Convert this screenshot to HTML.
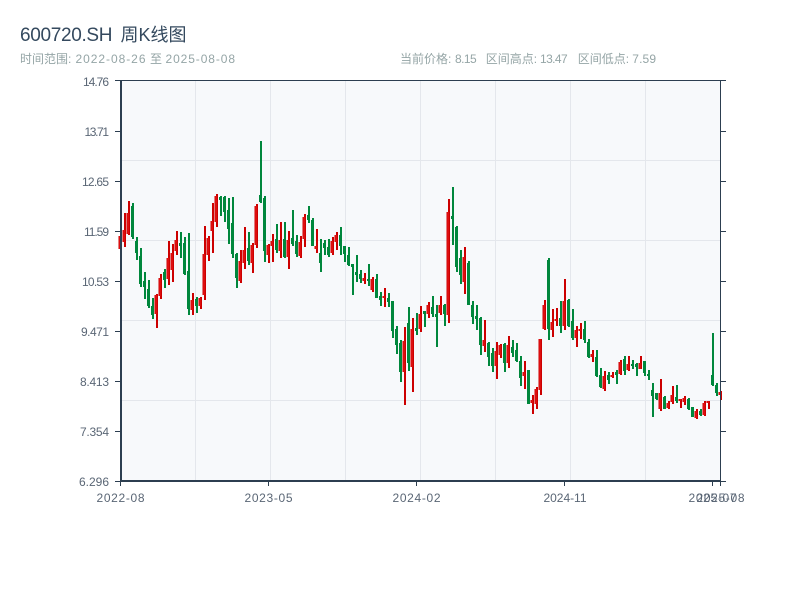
<!DOCTYPE html>
<html lang="zh">
<head>
<meta charset="utf-8">
<title>600720.SH 周K线图</title>
<style>
html,body{margin:0;padding:0;background:#fff;width:800px;height:600px;overflow:hidden}
svg{display:block}
text{font-family:"Liberation Sans","Noto Sans CJK SC",sans-serif}
.t{font-size:19px;fill:#34495e}
.c{font-size:18px;fill:#34495e}
.s{font-size:12px;fill:#95a5a6}
.a{font-size:12px;fill:#5a6675}
</style>
</head>
<body>
<svg width="800" height="600" viewBox="0 0 800 600" xmlns="http://www.w3.org/2000/svg">
<text x="20" y="41" class="t" textLength="92.5">600720.SH</text>
<text x="120.5" y="41" class="c">周K线图</text>
<text x="20" y="63" class="s">时间范围:</text>
<text x="75.5" y="63" class="s" textLength="70">2022-08-26</text>
<text x="150" y="63" class="s">至</text>
<text x="165.5" y="63" class="s" textLength="69.5">2025-08-08</text>
<text x="400" y="63" class="s">当前价格:</text>
<text x="455" y="63" class="s" textLength="21.7">8.15</text>
<text x="485.7" y="63" class="s">区间高点:</text>
<text x="540" y="63" class="s" textLength="27.7">13.47</text>
<text x="577.7" y="63" class="s">区间低点:</text>
<text x="632.3" y="63" class="s" textLength="23.7">7.59</text>

<rect x="121" y="81" width="600" height="400" fill="#f7f9fb"/>
<path d="M195.5 81V481M270.5 81V481M345.5 81V481M420.5 81V481M495.5 81V481M570.5 81V481M645.5 81V481M121 160.5H721M121 240.5H721M121 320.5H721M121 400.5H721" stroke="#e4e7ec" stroke-width="1" fill="none"/>

<path fill="none" stroke="#00873c" stroke-width="2" d="M133 203V239M137 237V260M141 248V287M145 272V299M149 280V308M153 298V319M165 269V288M181 232V258M185 237V275M189 233V315M197 297V313M221 196V216M225 196V222M229 198V244M233 197V258M237 253V288M249 232V265M261 141V203M265 196V262M277 224V253M285 222V258M293 210V246M297 235V257M309 206V223M313 218V246M321 239V272M325 240V255M329 239V257M341 227V255M345 246V262M349 247V266M353 264V295M357 255V282M361 270V283M369 264V286M377 274V298M381 292V306M389 293V307M393 301V338M397 326V354M401 340V382M409 307V371M417 313V335M425 311V327M433 296V317M437 305V347M445 304V326M453 187V245M457 226V272M461 250V284M469 261V305M473 301V324M477 305V330M481 317V355M489 342V366M493 348V372M505 343V372M513 340V357M517 343V362M521 356V386M529 370V404M549 258V340M561 301V333M569 299V327M573 309V340M585 321V343M589 339V358M597 350V377M601 368V388M609 372V384M617 370V384M625 356V375M633 360V369M637 363V376M645 361V376M649 370V380M653 383V417M657 393V400M665 396V409M677 385V403M689 398V410M693 407V417M701 409V416M713 333V386M717 383V396"/>
<path fill="none" stroke="#00873c" stroke-width="2" d="M132 206V237M136 241V253M140 256V284M144 281V287M148 289V306M152 306V315M164 272V280M180 243V246M184 243V274M188 271V309M196 299V306M220 197V200M224 197V212M228 210V229M232 223V254M236 254V278M248 248V261M260 195V202M264 198V251M276 239V250M284 239V257M292 238V244M296 241V254M308 215V220M312 220V246M320 253V263M324 243V248M328 247V255M340 235V246M344 246V254M348 255V265M352 264V267M356 272V275M360 274V279M368 279V281M376 279V298M380 296V300M388 298V302M392 301V331M396 329V345M400 343V372M408 323V363M416 328V331M424 311V314M432 307V314M436 314V317M444 305V314M452 216V219M456 227V267M460 258V275M468 263V305M472 305V317M476 316V319M480 318V345M488 343V357M492 353V366M504 344V363M512 347V353M516 350V361M520 361V378M528 370V404M548 260V329M560 318V326M568 300V326M572 321V338M584 329V340M588 342V357M596 357V376M600 375V387M608 375V380M616 372V375M624 359V371M632 364V366M636 364V367M644 361V373M648 374V376M652 390V396M656 393V399M664 397V409M676 397V401M688 399V409M692 407V417M700 411V415M712 375V385M716 385V393"/>
<path fill="none" stroke="#cc0000" stroke-width="2" d="M121 236V249M125 213V247M129 201V235M157 294V328M161 274V299M169 241V285M173 244V282M177 231V255M193 293V315M201 297V309M205 226V300M209 236V261M213 203V253M217 194V227M241 250V283M245 227V269M253 243V273M257 204V248M269 244V263M273 234V262M281 222V258M289 231V269M301 236V258M305 214V247M317 229V253M333 237V255M337 232V250M365 273V284M373 277V292M385 288V307M405 327V405M413 318V392M421 306V332M429 302V318M441 296V315M449 199V323M465 247V294M485 320V352M497 342V379M501 344V358M509 336V368M525 361V389M533 395V414M537 387V409M541 339V395M545 300V330M553 309V337M557 308V326M565 279V330M577 326V347M581 323V339M593 350V362M605 371V391M613 372V378M621 360V375M629 356V371M641 356V369M661 379V411M669 401V409M673 386V404M681 399V408M685 396V405M697 409V419M705 401V416M709 401V409M721 391V400"/>
<defs>
<path id="rb" fill="none" d="M120 236V249M124 230V242M128 213V234M156 295V314M160 278V296M168 258V279M172 253V270M176 240V251M192 300V310M200 298V306M204 254V295M208 238V255M212 221V231M216 196V222M240 261V281M244 250V263M252 245V263M256 206V245M268 245V255M272 241V246M280 240V251M288 240V257M300 242V256M304 217V239M316 246V249M332 241V253M336 235V242M364 278V281M372 279V290M384 296V298M404 341V372M412 329V367M420 314V329M428 305V314M440 305V313M448 212V315M464 257V282M484 340V346M496 351V366M500 345V355M508 345V363M524 372V376M532 400V403M536 389V404M540 339V390M544 305V329M552 322V330M556 319V321M564 301V326M576 330V338M580 329V331M592 354V357M604 376V389M612 375V377M620 362V374M628 364V370M640 363V369M660 393V409M668 403V408M672 395V402M680 399V401M684 398V402M696 411V418M704 403V415M708 401V403M720 392V395"/>
</defs>
<use href="#rb" stroke="#cc0000" stroke-width="3"/>
<use href="#rb" stroke="#ee1c1c" stroke-width="1"/>

<path d="M115 80.5H726M720.5 81V481" stroke="#2c3e50" stroke-width="1" fill="none"/>
<path d="M121 81V482M120 481H721" stroke="#2c3e50" stroke-width="2" fill="none"/>
<path d="M115 131.5H121M115 181.5H121M115 231.5H121M115 281.5H121M115 331.5H121M115 381.5H121M115 431.5H121M115 481.5H121M721 131.5H726M721 181.5H726M721 231.5H726M721 281.5H726M721 331.5H726M721 381.5H726M721 431.5H726M721 481.5H726M120.5 481V486M268.5 481V486M416.5 481V486M564.5 481V486M712.5 481V486M720.5 481V486" stroke="#2c3e50" stroke-width="1" fill="none"/>

<g text-anchor="end">
<text x="109" y="86" class="a" textLength="26">14.76</text>
<text x="109" y="136" class="a" textLength="24.5">13.71</text>
<text x="109" y="186" class="a" textLength="27">12.65</text>
<text x="109" y="236" class="a" textLength="25">11.59</text>
<text x="109" y="286" class="a" textLength="27">10.53</text>
<text x="109" y="336" class="a" textLength="28">9.471</text>
<text x="109" y="386" class="a" textLength="29">8.413</text>
<text x="109" y="436" class="a" textLength="29">7.354</text>
<text x="109" y="486" class="a" textLength="30">6.296</text>
</g>
<g text-anchor="middle">
<text x="120.5" y="502" class="a" textLength="48">2022-08</text>
<text x="268.5" y="502" class="a" textLength="48">2023-05</text>
<text x="416.5" y="502" class="a" textLength="48">2024-02</text>
<text x="565" y="502" class="a" textLength="43">2024-11</text>
<text x="712.5" y="502" class="a" textLength="48">2025-07</text>
<text x="720.5" y="502" class="a" textLength="48">2025-08</text>
</g>
</svg>
</body>
</html>
